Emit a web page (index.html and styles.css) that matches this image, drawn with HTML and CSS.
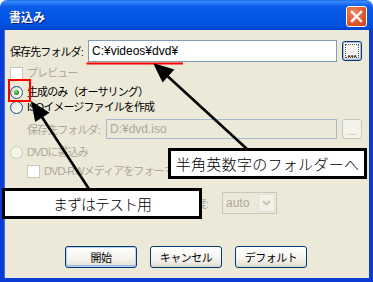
FILE: index.html
```html
<!DOCTYPE html>
<html lang="ja">
<head>
<meta charset="utf-8">
<title>書込み</title>
<link rel="stylesheet" href="styles.css">
</head>
<body>
<div class="window">
  <div class="titlebar">
    <span class="title">書込み</span>
    <div class="close">
      <svg width="19" height="19" viewBox="0 0 19 19"><path d="M5 5 L14 14 M14 5 L5 14" stroke="#fff" stroke-width="2.4" stroke-linecap="square"/></svg>
    </div>
  </div>
  <div class="frame">
    <div class="row path-row">
      <span class="lbl lbl-main">保存先フォルダ:</span>
      <div class="input">C:¥videos¥dvd¥</div>
      <div class="browse"><span class="dots">...</span></div>
    </div>
    <div class="row opt preview-row">
      <span class="check disabled"></span>
      <span class="txt gray">プレビュー</span>
    </div>
    <div class="row opt radio1-row">
      <span class="radio checked"></span>
      <span class="txt">生成のみ（オーサリング）</span>
    </div>
    <div class="row opt">
      <span class="radio"></span>
      <span class="txt">ISOイメージファイルを作成</span>
    </div>
    <div class="row sub-row">
      <span class="lbl lbl-sub gray">保存先フォルダ:</span>
      <div class="input input-dis">D:¥dvd.iso</div>
      <div class="browse browse-dis"><span class="dots">...</span></div>
    </div>
    <div class="row opt dvd-row">
      <span class="radio disabled"></span>
      <span class="txt gray">DVDに書込み</span>
    </div>
    <div class="row opt rw-row">
      <span class="check disabled"></span>
      <span class="txt gray txt-rw">DVD-RWメディアをフォーマットする</span>
    </div>
    <div class="row speed-row">
      <span class="lbl lbl-speed gray">書込み速度:</span>
      <div class="select">
        <span class="sel-val">auto</span>
        <span class="sel-btn"><svg width="9" height="6" viewBox="0 0 9 6"><path d="M1 1 L4.5 4.5 L8 1" fill="none" stroke="#C9C7BA" stroke-width="2"/></svg></span>
      </div>
    </div>
    <div class="buttons">
      <div class="btn btn-default">開始</div>
      <div class="btn">キャンセル</div>
      <div class="btn">デフォルト</div>
    </div>
  </div>

  <svg class="marks" width="373" height="282" viewBox="0 0 373 282">
    <rect x="86.5" y="62.5" width="96.5" height="2" fill="#FF0000"/>
    <rect x="9" y="80" width="21" height="21" fill="none" stroke="#FF0000" stroke-width="2"/>
    <line x1="247" y1="149" x2="163" y2="72" stroke="#000" stroke-width="2.6"/>
    <polygon points="153,63 174.4,69.6 162.6,82.4" fill="#000"/>
    <line x1="89" y1="189" x2="38" y2="111" stroke="#000" stroke-width="2.6"/>
    <polygon points="31,101 49.6,112.7 35.2,122.1" fill="#000"/>
  </svg>
  <div class="callout callout-1">半角英数字のフォルダーへ</div>
  <div class="callout callout-2">まずはテスト用</div>
</div>
</body>
</html>
```

FILE: styles.css
```css
html, body {
  margin: 0;
  padding: 0;
  background: #ffffff;
}

.window {
  position: relative;
  width: 373px;
  height: 282px;
  display: flex;
  flex-direction: column;
  font-family: "Liberation Sans", "Noto Sans CJK JP", sans-serif;
  font-size: 11px;
  color: #000;
}

.titlebar {
  flex: none;
  height: 30px;
  box-sizing: border-box;
  border-radius: 7px 7px 0 0;
  background: linear-gradient(#0A5DDE 0, #3B8EFB 1px, #2A7CF5 3px, #0E5EEA 6px, #0358E6 12px, #0055E4 20px, #0050DD 26px, #0042CC 30px);
  display: flex;
  align-items: center;
  justify-content: space-between;
  padding: 0 6px 0 9px;
}

.title {
  color: #fff;
  font-family: "Noto Sans CJK JP", sans-serif;
  font-weight: bold;
  font-size: 12px;
  letter-spacing: 0;
  text-shadow: 1px 1px 0 #0A1E80;
  margin-top: 2px;
}

.close {
  width: 21px;
  height: 21px;
  box-sizing: border-box;
  border: 1px solid #ffffff;
  border-radius: 3px;
  background: radial-gradient(ellipse at 35% 30%, #F08A62 0%, #E2582D 55%, #C8401B 100%);
  display: flex;
  align-items: center;
  justify-content: center;
  margin-top: 2px;
}

.close svg { display: block; }

.frame {
  flex: 1;
  background: #ECE9D8;
  border: 4px solid #0A3CD4;
  border-top: 0;
  box-shadow: inset 1px 0 0 #3A6FEA;
  padding: 10px 7px 0 6px;
  display: flex;
  flex-direction: column;
}

.row {
  display: flex;
  align-items: center;
  flex: none;
}

.lbl, .txt {
  font-family: "Liberation Sans", "Noto Sans CJK JP", sans-serif;
  font-size: 11px;
  letter-spacing: -0.9px;
  white-space: nowrap;
}

.gray { color: #ACA899; }

.path-row { height: 22px; }
.lbl-main { width: 78px; flex: none; }

.input {
  box-sizing: border-box;
  width: 249px;
  height: 22px;
  border: 1px solid #7F9DB9;
  background: #ffffff;
  font-size: 12px;
  line-height: 20px;
  padding-left: 3px;
  white-space: nowrap;
  flex: none;
}

.browse {
  position: relative;
  box-sizing: border-box;
  width: 20px;
  height: 20px;
  margin-left: 5px;
  border: 1px solid #003C74;
  border-radius: 3px;
  background: linear-gradient(#FFFFFF, #F2F1EC 70%, #D8D3C8);
  box-shadow: inset 0 0 0 1px #A8C1EC;
  display: flex;
  align-items: flex-end;
  justify-content: center;
  flex: none;
}

.browse::after {
  content: "";
  position: absolute;
  left: 2px;
  top: 2px;
  right: 2px;
  bottom: 2px;
  border: 1px dotted #6A4A4A;
}

.dots {
  font-size: 11px;
  line-height: 14px;
  letter-spacing: 0;
  font-weight: bold;
}

.opt { height: 15px; line-height: 15px; }
.opt .txt { margin-left: 4px; }

.preview-row { margin-top: 3px; height: 16px; }
.radio1-row { margin-top: 4px; }

.check {
  box-sizing: border-box;
  width: 13px;
  height: 13px;
  border: 1px solid #1C5180;
  background: #fff;
  flex: none;
}

.check.disabled { border-color: #CAC8BB; }

.radio {
  position: relative;
  box-sizing: border-box;
  width: 13px;
  height: 13px;
  border-radius: 50%;
  border: 1px solid #1C5180;
  background: linear-gradient(135deg, #DCD9CD 0%, #F4F3EE 60%, #FFFFFF 100%);
  flex: none;
}

.radio.checked::after {
  content: "";
  position: absolute;
  left: 3px;
  top: 3px;
  width: 5px;
  height: 5px;
  border-radius: 50%;
  background: radial-gradient(circle at 40% 35%, #7BE07B 0%, #21A121 60%, #1A8A1A 100%);
}

.radio.disabled {
  border-color: #CAC8BB;
  background: #F5F4EA;
}

.sub-row {
  height: 20px;
  margin-top: 4px;
  padding-left: 17px;
}

.lbl-sub { width: 79px; flex: none; }

.input-dis {
  width: 231px;
  height: 20px;
  line-height: 18px;
  background: #ECE9D8;
  border-color: #A5B9CF;
  color: #ACA899;
}

.browse-dis {
  border-color: #C9C7BA;
  background: #F5F4EA;
  box-shadow: none;
  color: #ACA899;
}

.browse-dis::after { display: none; }
.browse-dis .dots { font-weight: normal; }

.dvd-row { margin-top: 6px; }

.rw-row {
  margin-top: 4px;
  padding-left: 17px;
}

.txt-rw { margin-left: 3px; }

.speed-row {
  height: 22px;
  margin-top: 13px;
}

.lbl-speed {
  width: 198px;
  text-align: right;
  flex: none;
}

.select {
  box-sizing: border-box;
  width: 55px;
  height: 22px;
  margin-left: 14px;
  border: 1px solid #C9C7BA;
  display: flex;
  align-items: center;
  padding: 1px;
  flex: none;
}

.sel-val {
  flex: 1;
  color: #ACA899;
  font-size: 12px;
  padding-left: 2px;
}

.sel-btn {
  box-sizing: border-box;
  width: 17px;
  height: 18px;
  border: 1px solid #E6E3D6;
  border-radius: 2px;
  background: #F3F1E7;
  display: flex;
  align-items: center;
  justify-content: center;
}

.sel-btn svg { display: block; }

.buttons {
  display: flex;
  justify-content: center;
  gap: 13px;
  margin-top: 32px;
}

.btn {
  box-sizing: border-box;
  width: 72px;
  height: 22px;
  border: 1px solid #003C74;
  border-radius: 3px;
  background: linear-gradient(#FFFFFF 0%, #F4F3EE 60%, #E6E3D8 88%, #D6D0C5 100%);
  display: flex;
  align-items: center;
  justify-content: center;
  font-family: "Liberation Sans", "Noto Sans CJK JP", sans-serif;
  font-size: 11px;
  letter-spacing: -0.5px;
}

.btn-default {
  box-shadow: inset 0 0 0 1px #B9D1F6, inset 0 -1px 0 1px #9AB8EC;
}

.marks {
  position: absolute;
  left: 0;
  top: 0;
  pointer-events: none;
}

.callout {
  position: absolute;
  box-sizing: border-box;
  height: 31px;
  border: 3px solid #000;
  background: #fff;
  display: flex;
  align-items: center;
  justify-content: center;
  font-family: "Noto Sans CJK JP", sans-serif;
  font-size: 15px;
  font-weight: 300;
  white-space: nowrap;
}

.callout-1 {
  left: 168px;
  top: 148px;
  width: 199px;
  letter-spacing: 0.3px;
}

.callout-2 {
  left: 2px;
  top: 188px;
  width: 200px;
  letter-spacing: -1px;
}
```
